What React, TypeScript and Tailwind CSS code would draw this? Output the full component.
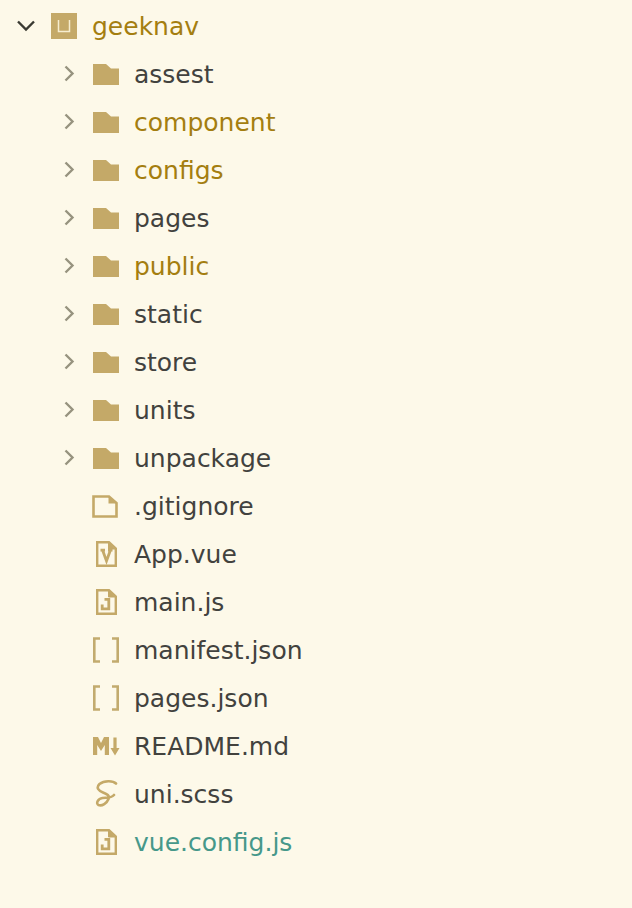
import React from "react";

const C = "#c4a968";

function Chevron({ open }: { open?: boolean }) {
  return (
    <svg width="20" height="20" viewBox="0 0 20 20" fill="none" className="shrink-0">
      {open ? (
        <path d="M2 5.5 L10 13.5 L18 5.5" stroke="#3a3a32" strokeWidth="2.4" />
      ) : (
        <path d="M5.5 2.5 L12.5 9.5 L5.5 16.5" stroke="#97937f" strokeWidth="2.4" />
      )}
    </svg>
  );
}

function Folder() {
  return (
    <svg width="26" height="21" viewBox="0 0 26 21" className="mt-[1px] shrink-0">
      <path d="M0 0 H13 L18 4.5 H26 V21 H0 Z" fill={C} />
    </svg>
  );
}

function Root() {
  return (
    <svg width="26" height="26" viewBox="0 0 26 26" className="shrink-0">
      <rect width="26" height="26" fill={C} />
      <path d="M7.5 7 V18.5 H18.5 V7" fill="none" stroke="#f6edcf" strokeWidth="1.5" />
    </svg>
  );
}

function Sheet({ mark }: { mark?: "V" | "J" }) {
  return (
    <svg width="26" height="26" viewBox="0 0 26 26" className="shrink-0">
      <path d="M5.2 1.2 H17 L23.8 7.5 V24.8 H5.2 Z" fill="none" stroke={C} strokeWidth="2.4" />
      <path d="M16.5 1.5 V8 H23" fill={C} stroke={C} strokeWidth="1" />
      {mark === "V" && (
        <path d="M8.5 9.2 H13 M16 9.2 H20.5 M10.5 9 L14.5 20 L18.5 9" fill="none" stroke={C} strokeWidth="2.8" />
      )}
      {mark === "J" && <path d="M12.5 10.3 H18.2 M16.8 10 V19.8 H10.2 V15.5" fill="none" stroke={C} strokeWidth="2.8" />}
    </svg>
  );
}

function Blank() {
  return (
    <svg width="26" height="23" viewBox="0 0 26 23" className="shrink-0">
      <path d="M1.5 1.5 H17 L24.5 8 V21.5 H1.5 Z" fill="none" stroke={C} strokeWidth="2.6" />
      <path d="M16.5 1.5 V8.5 H24.5 Z" fill={C} />
    </svg>
  );
}

function Brackets() {
  return (
    <svg width="28" height="26" viewBox="0 0 28 26" className="shrink-0">
      <path d="M8 1.5 H2.3 V24.5 H8 M20 1.5 H25.7 V24.5 H20" fill="none" stroke="#c2ab6e" strokeWidth="2.6" />
    </svg>
  );
}

function Markdown() {
  return (
    <svg width="28" height="20" viewBox="0 0 28 20" className="shrink-0">
      <path d="M1 19 V1 H6 L9 7 L12 1 H17 V19 H12.8 V9 L9 15 L5.2 9 V19 Z" fill={C} />
      <path d="M21.4 1.5 H24.6 V12 H27.5 L23 19.5 L18.5 12 H21.4 Z" fill={C} />
    </svg>
  );
}

function Sass() {
  return (
    <svg width="26" height="28" viewBox="0 0 26 28" className="shrink-0">
      <path
        d="M24 3.5 C21 0.5 12 0.5 7.5 4 C3.5 8 7 11 11 12.5 C15 14 18 15.5 16.5 19 C15 23 10 26.5 6.5 25 C3.5 23.5 6 18.5 10.5 18 C14.5 17.5 19 18.5 22 15"
        fill="none"
        stroke={C}
        strokeWidth="2.6"
        strokeLinecap="round"
      />
    </svg>
  );
}

type Item = { name: string; color: string; icon?: React.ReactNode };
const dark = "#42423e";
const yellow = "#a47e10";
const teal = "#46988a";

const folders: Item[] = [
  { name: "assest", color: dark },
  { name: "component", color: yellow },
  { name: "configs", color: yellow },
  { name: "pages", color: dark },
  { name: "public", color: yellow },
  { name: "static", color: dark },
  { name: "store", color: dark },
  { name: "units", color: dark },
  { name: "unpackage", color: dark },
];

const files: Item[] = [
  { name: ".gitignore", color: dark, icon: <Blank /> },
  { name: "App.vue", color: dark, icon: <Sheet mark="V" /> },
  { name: "main.js", color: dark, icon: <Sheet mark="J" /> },
  { name: "manifest.json", color: dark, icon: <Brackets /> },
  { name: "pages.json", color: dark, icon: <Brackets /> },
  { name: "README.md", color: dark, icon: <Markdown /> },
  { name: "uni.scss", color: dark, icon: <Sass /> },
  { name: "vue.config.js", color: teal, icon: <Sheet mark="J" /> },
];

function Label({ name, color }: { name: string; color: string }) {
  return (
    <span className="whitespace-nowrap pt-[2px] text-[25px] leading-[46px]" style={{ color }}>
      {name}
    </span>
  );
}

export default function App() {
  return (
    <div className="h-[908px] w-[632px] overflow-hidden bg-[#fdf9e9] pt-[2px] font-['DejaVu_Sans',sans-serif]">
      <div className="flex h-12 items-center pl-[16px]">
        <Chevron open />
        <div className="ml-[15px] flex w-[41px] shrink-0">
          <Root />
        </div>
        <Label name="geeknav" color={yellow} />
      </div>
      {folders.map((f) => (
        <div key={f.name} className="flex h-12 items-center pl-[60px]">
          <Chevron />
          <div className="ml-[13px] flex w-[41px] shrink-0">
            <Folder />
          </div>
          <Label name={f.name} color={f.color} />
        </div>
      ))}
      {files.map((f) => (
        <div key={f.name} className="flex h-12 items-center pl-[92px]">
          <div className="flex w-[42px] shrink-0 items-center">{f.icon}</div>
          <Label name={f.name} color={f.color} />
        </div>
      ))}
    </div>
  );
}
